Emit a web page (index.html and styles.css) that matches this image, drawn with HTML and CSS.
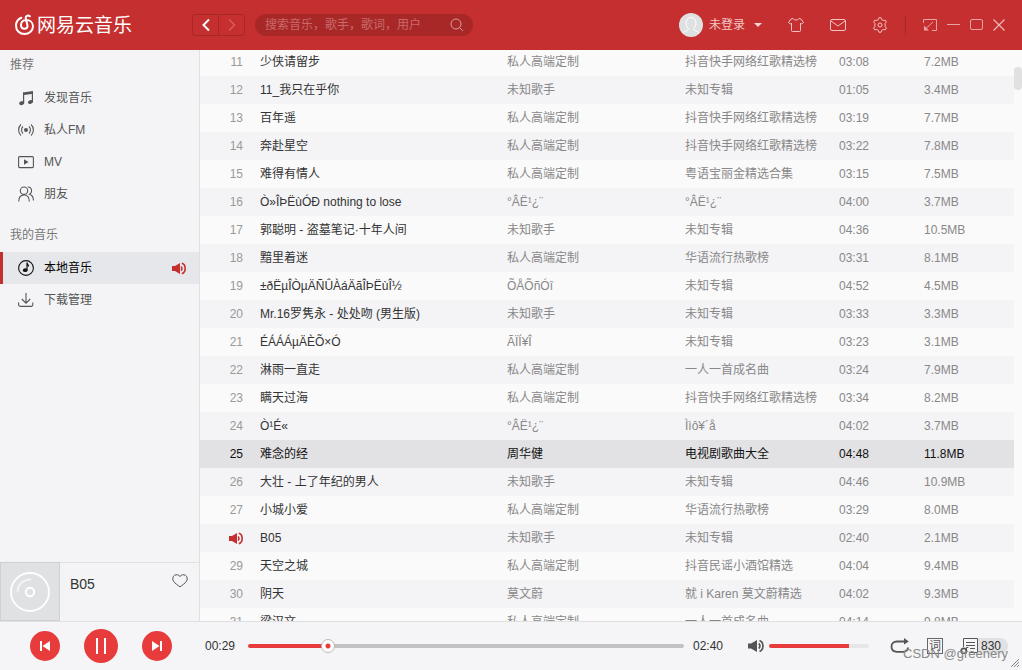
FILE: index.html
```html
<!DOCTYPE html>
<html lang="zh-CN">
<head>
<meta charset="utf-8">
<title>网易云音乐</title>
<link rel="stylesheet" href="styles.css">
</head>
<body>
<div class="app">
  <header class="topbar">
    <a class="brand" href="#">
      <svg class="brand-mark" width="19" height="22" viewBox="0 0 19 22" fill="none" stroke="#fff" stroke-width="2" stroke-linecap="round"><path d="M6.300 3.700C3 5 1 8 1 11.700C1 16.800 4.900 20 9.500 20C14.300 20 18 16.600 18 12.300C18 8.300 14.800 6 11.300 6C7.800 6 6 8.400 6 11C6 13.200 7.500 14.800 9.500 14.800C11.600 14.800 12.900 13.200 12.400 11.200L10.800 4.400C10.300 2.100 12.800.600 14.800 2.300"/></svg>
      <span class="brand-name">网易云音乐</span>
    </a>
    <div class="history">
      <button class="history-btn" aria-label="后退"><svg width="12" height="14" viewBox="0 0 12 14" fill="none" stroke="#fff" stroke-width="2"><path d="M9 1.500L3.500 7l5.500 5.500"/></svg></button>
      <button class="history-btn" aria-label="前进"><svg width="12" height="14" viewBox="0 0 12 14" fill="none" stroke="#dc5a5a" stroke-width="1.600"><path d="M3 1.500L8.500 7 3 12.500"/></svg></button>
    </div>
    <form class="search">
      <input class="search-input" type="text" aria-label="搜索" placeholder="搜索音乐，歌手，歌词，用户">
      <button class="icon-btn" type="button" aria-label="开始搜索"><svg width="14" height="14" viewBox="0 0 14 14" fill="none" stroke="#e09a9a"><circle cx="6" cy="6" r="5"/><path d="M9.600 9.600L13 13"/></svg></button>
    </form>
    <div class="account">
      <button class="account-btn">
        <svg class="avatar" width="24" height="24" viewBox="0 0 24 24"><circle cx="12" cy="12" r="12" fill="#dfe0e1"/><path d="M4 20C5 17.500 9.500 18 9.500 16.200C9.500 15 7 14 7 10C7 6.600 9 4.500 12 4.500s5 2.100 5 5.500c0 4-2.500 5-2.500 6.200c0 1.800 4.500 1.300 5.500 3.800" fill="none" stroke="#fff"/></svg>
        <span class="account-name">未登录</span>
        <svg width="8" height="4" viewBox="0 0 8 4"><path d="M0 0h8L4 4z" fill="#f5d5d5"/></svg>
      </button>
    </div>
    <nav class="tools" aria-label="工具">
      <button class="icon-btn" aria-label="皮肤"><svg width="16" height="16" viewBox="0 0 16 16" fill="none" stroke="#f0c4c4"><path d="M5 1.500c1 2 5 2 6 0l2 .5 2.500 3.500-2 1.500-1-1v7.500c0 .7-.3 1-1 1h-7c-.7 0-1-.3-1-1V6l-1 1-2-1.500L3 2z" stroke-linejoin="round"/></svg></button>
      <button class="icon-btn" aria-label="消息"><svg width="16" height="14" viewBox="0 0 16 14" fill="none" stroke="#f0c4c4"><rect x=".5" y="1.500" width="15" height="11" rx="1.500"/><path d="M1 3l7 5 7-5"/></svg></button>
      <button class="icon-btn" aria-label="设置"><svg width="16" height="16" viewBox="0 0 16 16" fill="none" stroke="#f0c4c4" stroke-linejoin="round"><path d="M6.300 2.600L7 .700h2l.7 1.900 1.500.900 2-.4 1.200 1.900-1.300 1.600v2.800l1.300 1.600-1.200 1.900-2-.4-1.500.9-.7 1.900H7l-.7-1.900-1.500-.9-2 .4L1.600 11l1.300-1.600V6.600L1.600 5l1.200-1.900 2 .4z"/><circle cx="8" cy="8" r="2"/></svg></button>
    </nav>
    <nav class="window-tools" aria-label="窗口">
      <button class="icon-btn" aria-label="迷你模式"><svg width="14" height="12" viewBox="0 0 14 12" fill="none" stroke="#e8a3a3"><path d="M.5 4V.500h13v11H9M10 3L3 9.500"/><path d="M1 6.500v5h5z" fill="#e8a3a3" stroke="none"/></svg></button>
      <button class="icon-btn" aria-label="最小化"><svg width="13" height="12" viewBox="0 0 13 12" stroke="#e8a3a3"><path d="M0 5.500h13"/></svg></button>
      <button class="icon-btn" aria-label="最大化"><svg width="13" height="12" viewBox="0 0 13 12" fill="none" stroke="#e8a3a3"><rect x=".5" y=".5" width="12" height="10" rx="1.500"/></svg></button>
      <button class="icon-btn" aria-label="关闭"><svg width="12" height="12" viewBox="0 0 12 12" stroke="#f0b9b9" stroke-width="1.200"><path d="M.5.500l11 11M11.500.500l-11 11"/></svg></button>
    </nav>
  </header>

  <aside class="sidebar">
    <nav class="menu">
      <h2 class="menu-title">推荐</h2>
      <a class="menu-item" href="#"><svg width="16" height="16" viewBox="0 0 16 16" fill="#555"><path d="M5 2.500L15 1v2.800L6.200 5.100z"/><path d="M5 2.500h1.200v10.300H5zM13.800 1.500H15V12h-1.200z"/><ellipse cx="3.700" cy="13.200" rx="2.600" ry="1.900" transform="rotate(-15 3.700 13.200)"/><ellipse cx="12.500" cy="12" rx="2.600" ry="1.900" transform="rotate(-15 12.500 12)"/></svg>发现音乐</a>
      <a class="menu-item" href="#"><svg width="16" height="16" viewBox="0 0 16 16" fill="none" stroke="#555" stroke-width="1.100"><circle cx="8" cy="8" r="2" fill="#555" stroke="none"/><path d="M5 4.500c-1.900 1.800-1.900 5.200 0 7M11 4.500c1.900 1.800 1.900 5.200 0 7M3 2.500C-.2 5.300-.2 10.700 3 13.500M13 2.500c3.200 2.800 3.200 8.200 0 11"/></svg>私人FM</a>
      <a class="menu-item" href="#"><svg width="16" height="16" viewBox="0 0 16 16" fill="none" stroke="#555" stroke-width="1.100"><rect x=".6" y="2.600" width="14.800" height="11" rx="1"/><path d="M6 5.200L10.500 8 6 10.800z" fill="#555" stroke="none"/></svg>MV</a>
      <a class="menu-item" href="#"><svg width="16" height="16" viewBox="0 0 16 16" fill="none" stroke="#555" stroke-width="1.100"><circle cx="6" cy="4.700" r="3.700"/><path d="M.7 15.500c0-4 2-6.500 5.300-6.500s5.300 2.500 5.300 6.500M9.700 1c2.200-.3 3.900 1.500 3.900 3.700 0 1.700-.8 2.900-2 3.600 2.300.7 3.800 3.200 3.800 6.200"/></svg>朋友</a>
      <h2 class="menu-title menu-title-mine">我的音乐</h2>
      <a class="menu-item menu-item-active" href="#"><svg width="16" height="16" viewBox="0 0 16 16" fill="none" stroke="#111" stroke-width="1.100"><circle cx="8" cy="8" r="7.400"/><path d="M9 10.500V2.500c0 1.800 1.600 2 1.600 4" stroke-width="1.200"/><ellipse cx="7.200" cy="10.200" rx="2.300" ry="1.900" fill="#111" stroke="none"/></svg>本地音乐
        <svg class="playing" width="14" height="14" viewBox="0 0 14 14"><path d="M0 5h3L8 2v11L3 10H0z" fill="#c62f2f"/><path d="M9 5.500c1.300 1.100 1.300 3 0 4M9.800 2.300c4.500 1.400 4.500 9 0 10.400" fill="none" stroke="#c62f2f" stroke-width="1.600"/></svg></a>
      <a class="menu-item" href="#"><svg width="16" height="16" viewBox="0 0 16 16" fill="none" stroke="#555" stroke-width="1.100"><path d="M8 1v10M3.800 7L8 11.200 12.200 7M.6 10.500v2.300c0 1 .6 1.600 1.600 1.600h11c1 0 1.600-.6 1.600-1.600v-2.300"/></svg>下载管理</a>
    </nav>
    <section class="now">
      <div class="cover"><svg width="40" height="40" viewBox="0 0 40 40" fill="none" stroke="#fff"><circle cx="20" cy="20" r="19" stroke-width="1.800"/><circle cx="20" cy="20" r="4.200" stroke-width="2"/><path d="M7.500 20.500C7.500 12.500 13 7.500 21 7.500" stroke="#f4f4f5" stroke-width="1.800"/></svg></div>
      <span class="now-title">B05</span>
      <button class="icon-btn now-like" aria-label="喜欢"><svg width="16" height="14" viewBox="0 0 16 14" fill="none" stroke="#555"><path d="M8 2.500C6.600.600 4.400.300 2.700 1.200.500 2.500.200 5.500 1.700 7.500 3 9.300 6 11.500 8 12.800c2-1.300 5-3.500 6.300-5.300 1.500-2 1.200-5-1-6.300C11.600.300 9.400.600 8 2.500z"/></svg></button>
    </section>
  </aside>

  <main class="songs">
    <table class="song-table">
      <colgroup><col class="col-index"><col><col class="col-artist"><col class="col-album"><col class="col-time"><col class="col-size"></colgroup>
      <tbody>
        <tr><td>11</td><td>少侠请留步</td><td>私人高端定制</td><td>抖音快手网络红歌精选榜</td><td>03:08</td><td>7.2MB</td></tr>
        <tr><td>12</td><td>11_我只在乎你</td><td>未知歌手</td><td>未知专辑</td><td>01:05</td><td>3.4MB</td></tr>
        <tr><td>13</td><td>百年遥</td><td>私人高端定制</td><td>抖音快手网络红歌精选榜</td><td>03:19</td><td>7.7MB</td></tr>
        <tr><td>14</td><td>奔赴星空</td><td>私人高端定制</td><td>抖音快手网络红歌精选榜</td><td>03:22</td><td>7.8MB</td></tr>
        <tr><td>15</td><td>难得有情人</td><td>私人高端定制</td><td>粤语宝丽金精选合集</td><td>03:15</td><td>7.5MB</td></tr>
        <tr><td>16</td><td>Ò»ÎÞËùÓÐ nothing to lose</td><td>°ÂË¹¿¨</td><td>°ÂË¹¿¨</td><td>04:00</td><td>3.7MB</td></tr>
        <tr><td>17</td><td>郭聪明 - 盗墓笔记·十年人间</td><td>未知歌手</td><td>未知专辑</td><td>04:36</td><td>10.5MB</td></tr>
        <tr><td>18</td><td>黯里着迷</td><td>私人高端定制</td><td>华语流行热歌榜</td><td>03:31</td><td>8.1MB</td></tr>
        <tr><td>19</td><td>±ðËµÎÒµÄÑÛÀáÄãÎÞËùÎ½</td><td>ÕÅÕñÓî</td><td>未知专辑</td><td>04:52</td><td>4.5MB</td></tr>
        <tr><td>20</td><td>Mr.16罗隽永 - 处处吻 (男生版)</td><td>未知歌手</td><td>未知专辑</td><td>03:33</td><td>3.3MB</td></tr>
        <tr><td>21</td><td>ÉÁÁÁµÄÈÕ×Ó</td><td>ÃÏÍ¥Î</td><td>未知专辑</td><td>03:23</td><td>3.1MB</td></tr>
        <tr><td>22</td><td>淋雨一直走</td><td>私人高端定制</td><td>一人一首成名曲</td><td>03:24</td><td>7.9MB</td></tr>
        <tr><td>23</td><td>瞒天过海</td><td>私人高端定制</td><td>抖音快手网络红歌精选榜</td><td>03:34</td><td>8.2MB</td></tr>
        <tr><td>24</td><td>Ò¹É«</td><td>°ÂË¹¿¨</td><td>Ììô¥´å</td><td>04:02</td><td>3.7MB</td></tr>
        <tr class="selected"><td>25</td><td>难念的经</td><td>周华健</td><td>电视剧歌曲大全</td><td>04:48</td><td>11.8MB</td></tr>
        <tr><td>26</td><td>大壮 - 上了年纪的男人</td><td>未知歌手</td><td>未知专辑</td><td>04:46</td><td>10.9MB</td></tr>
        <tr><td>27</td><td>小城小爱</td><td>私人高端定制</td><td>华语流行热歌榜</td><td>03:29</td><td>8.0MB</td></tr>
        <tr><td><svg class="row-playing" width="14" height="14" viewBox="0 0 14 14" role="img" aria-label="正在播放"><path d="M0 5h3L8 2v11L3 10H0z" fill="#c62f2f"/><path d="M9 5.500c1.300 1.100 1.300 3 0 4M9.800 2.300c4.500 1.400 4.500 9 0 10.400" fill="none" stroke="#c62f2f" stroke-width="1.600"/></svg></td><td>B05</td><td>未知歌手</td><td>未知专辑</td><td>02:40</td><td>2.1MB</td></tr>
        <tr><td>29</td><td>天空之城</td><td>私人高端定制</td><td>抖音民谣小酒馆精选</td><td>04:04</td><td>9.4MB</td></tr>
        <tr><td>30</td><td>阴天</td><td>莫文蔚</td><td>就 i Karen 莫文蔚精选</td><td>04:02</td><td>9.3MB</td></tr>
        <tr><td>31</td><td>梁汉文</td><td>私人高端定制</td><td>一人一首成名曲</td><td>04:14</td><td>9.8MB</td></tr>
      </tbody>
    </table>
    <div class="scrollbar"><div class="scroll-thumb"></div></div>
  </main>

  <footer class="player">
    <div class="transport">
      <button class="round" aria-label="上一首"><svg width="12" height="12" viewBox="0 0 12 12" fill="#fff"><path d="M1 1h2v10H1zM11 1v10L3.500 6z"/></svg></button>
      <button class="round round-main" aria-label="暂停"><svg width="12" height="16" viewBox="0 0 12 16" fill="#fff"><path d="M1 0h2v16H1zM9 0h2v16H9z"/></svg></button>
      <button class="round" aria-label="下一首"><svg width="12" height="12" viewBox="0 0 12 12" fill="#fff"><path d="M9 1h2v10H9zM1 1v10L8.500 6z"/></svg></button>
    </div>
    <span class="time">00:29</span>
    <input class="seek" type="range" min="0" max="160" step="any" value="27.7" aria-label="播放进度">
    <span class="time time-total">02:40</span>
    <div class="volume">
      <button class="icon-btn" aria-label="静音"><svg width="17" height="14" viewBox="0 0 17 14"><path d="M0 4.500h3L9 1v12L3 9.500H0z" fill="#555"/><path d="M10.700 4.500c1.600 1.300 1.600 3.700 0 5M11.500 1.500c4.600 1.700 4.600 9.300 0 11" fill="none" stroke="#555" stroke-width="1.700"/></svg></button>
      <input class="level" type="range" min="0" max="100" value="80" aria-label="音量">
    </div>
    <div class="extras">
      <button class="icon-btn" aria-label="循环播放"><svg width="20" height="16" viewBox="0 0 20 16" fill="none" stroke="#555" stroke-width="1.800"><path d="M16 3.500H7C3.500 3.500 1.500 5.500 1.500 8.500S3.500 13.800 7 13.800h6c3 0 4.800-1.500 5-4.300"/><path d="M14 0l4.800 3.500L14 6.500z" fill="#555" stroke="none"/></svg></button>
      <button class="lyric" aria-label="歌词">词</button>
      <button class="queue" aria-label="播放列表 830"><svg width="18" height="16" viewBox="0 0 18 16" fill="none" stroke="#555"><path d="M3.500 9V.500h14v14H9M6 4.500h9M6 7.500h9M10 10.500h5"/><circle cx="3.800" cy="13" r="2.600" stroke-width="1.800"/><path d="M6.400 13V9.500h2"/></svg><span class="queue-count">830</span></button>
      <span class="watermark">CSDN @greenery</span>
    </div>
    <svg class="grip" width="10" height="10" viewBox="0 0 10 10" stroke="#777" stroke-width=".9"><path d="M1 9L9 1M4 9l5-5M7 9l2-2"/></svg>
  </footer>
</div>
</body>
</html>
```
FILE: styles.css
```css
* { box-sizing: border-box; }
body {
  margin: 0;
  font: 12px/18px "Liberation Sans", "Noto Sans CJK SC", sans-serif;
  color: #333;
}
button, input { font: inherit; color: inherit; }
button { border: 0; padding: 0; background: none; }
a { color: inherit; text-decoration: none; }
svg { display: block; flex: none; }

.app {
  display: grid;
  grid-template: 50px minmax(0, 1fr) 49px / 200px minmax(0, 1fr);
  height: 100vh;
  background: #fafafa;
}

/* Top bar */
.topbar {
  grid-column: 1 / -1;
  display: flex;
  align-items: center;
  padding: 0 17px 0 15px;
  background: #c62f2f;
}
.brand { display: flex; align-items: center; gap: 3px; width: 177px; color: #fff; }
.brand-name { padding-top: 2px; font-size: 19px; line-height: 24px; white-space: nowrap; }
.history {
  display: flex;
  width: 53px;
  height: 22px;
  border: 1px solid #a82828;
  border-radius: 3px;
}
.history-btn { flex: 1; display: grid; place-items: center; }
.history-btn + .history-btn { border-left: 1px solid #a82828; }
.search {
  display: flex;
  align-items: center;
  width: 218px;
  height: 22px;
  margin-left: 10px;
  padding: 0 9px 0 10px;
  border-radius: 11px;
  background: #a82828;
}
.search-input { flex: 1; min-width: 0; padding: 0; border: 0; outline: 0; background: none; }
.search-input::placeholder { color: #c96a6a; }
.account { margin-left: auto; }
.account-btn { display: flex; align-items: center; gap: 6px; color: #f0c8c8; }
.account-name { margin-right: 3px; }
.icon-btn { display: grid; place-items: center; }
.tools { display: flex; align-items: center; gap: 26px; margin-left: 26px; }
.window-tools {
  display: flex;
  align-items: center;
  gap: 10px;
  height: 20px;
  margin-left: 17px;
  padding-left: 17px;
  border-left: 1px solid #a82828;
}

/* Sidebar */
.sidebar {
  display: flex;
  flex-direction: column;
  border-right: 1px solid #e0e0e1;
  background: #f4f4f6;
}
.menu { flex: 1; }
.menu-title { margin: 0; padding: 6px 10px 8px; font-size: 12px; font-weight: 400; color: #777; }
.menu-title-mine { padding: 16px 10px 8px; }
.menu-item {
  display: flex;
  align-items: center;
  gap: 10px;
  height: 32px;
  padding: 0 13px 0 15px;
  border-left: 3px solid transparent;
  color: #555;
}
.menu-item-active { border-color: #c62f2f; background: #e6e7ea; color: #000; }
.playing { margin-left: auto; }
.now { display: flex; border-top: 1px solid #e0e0e1; }
.cover {
  display: grid;
  place-items: center;
  width: 60px;
  height: 59px;
  margin-top: -1px;
  border: 1px solid #cfd0d1;
  background: #e0e1e3;
}
.now-title { flex: 1; padding: 12px 10px; font-size: 14px; }
.now-like { align-self: start; margin: 11px 11px 0 0; }

/* Song list */
.songs { display: flex; overflow: hidden; }
.song-table {
  flex: 1;
  align-self: flex-start;
  margin-top: -2px;
  border-collapse: collapse;
  table-layout: fixed;
  color: #888;
}
.col-index { width: 60px; }
.col-artist { width: 178px; }
.col-album { width: 154px; }
.col-time { width: 85px; }
.col-size { width: 90px; }
.song-table td { height: 28px; padding: 0; overflow: hidden; white-space: nowrap; }
.song-table td:first-child { padding-right: 17px; text-align: right; color: #999; }
.song-table td:nth-child(2) { color: #333; }
.song-table tr:nth-child(even) { background: #f4f4f6; }
.song-table .selected { background: #e2e2e4; }
.song-table .selected td { color: #111; }
.row-playing { margin-left: auto; }
.scrollbar { width: 8px; padding-top: 17px; }
.scroll-thumb { height: 23px; border-radius: 4px; background: #e1e1e2; }

/* Player bar */
.player {
  grid-column: 1 / -1;
  position: relative;
  display: flex;
  align-items: center;
  padding: 0 14px 0 30px;
  border-top: 1px solid #e0e0e1;
  background: #f5f5f7;
}
.transport { display: flex; align-items: center; gap: 24px; width: 175px; }
.round {
  display: grid;
  place-items: center;
  width: 30px;
  height: 30px;
  border-radius: 50%;
  background: #e83c3c;
}
.round-main { width: 34px; height: 34px; }
.time { width: 43px; }
.seek, .level { appearance: none; height: 14px; margin: 0; background: none; }
.seek { flex: 1; min-width: 0; }
.seek::-webkit-slider-runnable-track {
  height: 4px;
  border-radius: 2px;
  background: linear-gradient(to right, #e83c3c 18%, #c2c2c4 18%);
}
.seek::-webkit-slider-thumb {
  appearance: none;
  width: 14px;
  height: 14px;
  margin-top: -5px;
  border: 1px solid #bbb;
  border-radius: 50%;
  background: radial-gradient(circle, #e83c3c 2px, #fff 3px);
}
.time-total { width: 55px; padding-left: 9px; margin-right: 9px; }
.volume { display: flex; align-items: center; gap: 4px; margin-right: 21px; }
.level { width: 100px; }
.level::-webkit-slider-runnable-track {
  height: 4px;
  border-radius: 2px;
  background: linear-gradient(to right, #e83c3c 80%, #e6e6e8 80%);
}
.level::-webkit-slider-thumb { appearance: none; width: 4px; height: 4px; }
.extras { position: relative; display: flex; align-items: center; gap: 17px; }
.lyric { width: 16px; height: 16px; border: 1px solid #666; color: #555; line-height: 14px; }
.queue { display: flex; align-items: center; }
.queue-count {
  width: 30px;
  height: 16px;
  padding-left: 3px;
  border-radius: 0 8px 8px 0;
  background: #e1e1e3;
  line-height: 16px;
  text-align: left;
}
.watermark {
  position: absolute;
  right: 0;
  top: 7px;
  font-size: 13px;
  color: #888;
  white-space: nowrap;
  pointer-events: none;
}
.grip { position: absolute; right: 2px; bottom: 2px; }
```
